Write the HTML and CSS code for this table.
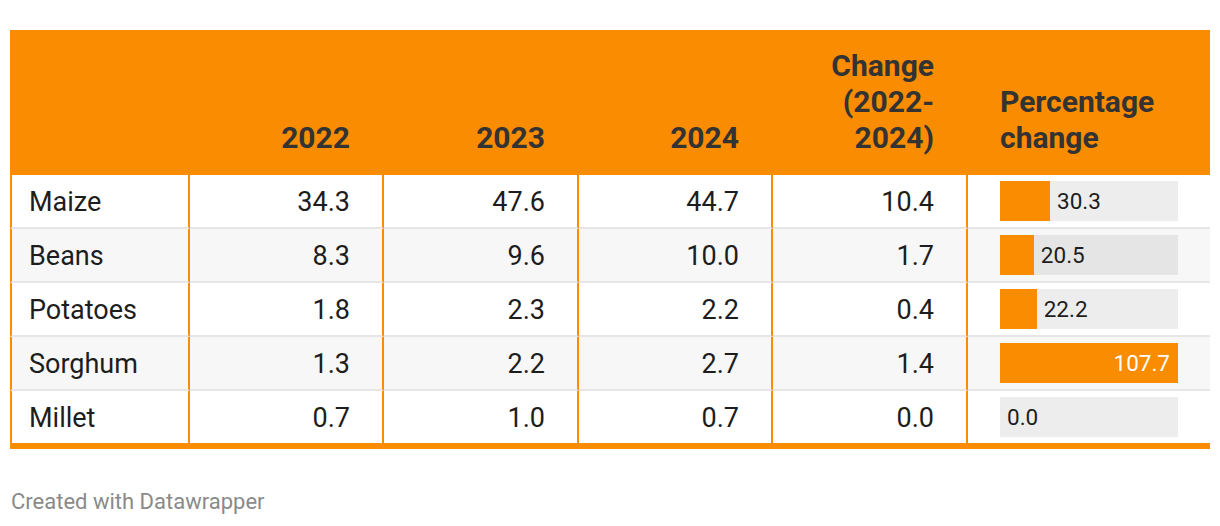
FILE: index.html
```html
<!DOCTYPE html>
<html lang="en">
<head>
<meta charset="utf-8">
<title>Crop production table</title>
<link rel="stylesheet" href="styles.css">
</head>
<body>
<div class="chart">
  <table class="dw-table">
    <colgroup>
      <col class="c1"><col class="c2"><col class="c3"><col class="c4"><col class="c5"><col class="c6">
    </colgroup>
    <thead>
      <tr>
        <th class="first"></th>
        <th class="num">2022</th>
        <th class="num">2023</th>
        <th class="num">2024</th>
        <th class="num">Change<br>(2022-<br>2024)</th>
        <th class="bar-col">Percentage<br>change</th>
      </tr>
    </thead>
    <tbody>
      <tr>
        <td class="first">Maize</td><td class="num">34.3</td><td class="num">47.6</td><td class="num">44.7</td><td class="num">10.4</td>
        <td class="bar-col"><div class="bar"><div class="fill" style="width:28.13%"></div><span class="lbl">30.3</span></div></td>
      </tr>
      <tr class="alt">
        <td class="first">Beans</td><td class="num">8.3</td><td class="num">9.6</td><td class="num">10.0</td><td class="num">1.7</td>
        <td class="bar-col"><div class="bar"><div class="fill" style="width:19.03%"></div><span class="lbl">20.5</span></div></td>
      </tr>
      <tr>
        <td class="first">Potatoes</td><td class="num">1.8</td><td class="num">2.3</td><td class="num">2.2</td><td class="num">0.4</td>
        <td class="bar-col"><div class="bar"><div class="fill" style="width:20.61%"></div><span class="lbl">22.2</span></div></td>
      </tr>
      <tr class="alt">
        <td class="first">Sorghum</td><td class="num">1.3</td><td class="num">2.2</td><td class="num">2.7</td><td class="num">1.4</td>
        <td class="bar-col"><div class="bar full"><div class="fill" style="width:100%"></div><span class="lbl">107.7</span></div></td>
      </tr>
      <tr class="last">
        <td class="first">Millet</td><td class="num">0.7</td><td class="num">1.0</td><td class="num">0.7</td><td class="num">0.0</td>
        <td class="bar-col"><div class="bar"><div class="fill" style="width:0%"></div><span class="lbl">0.0</span></div></td>
      </tr>
    </tbody>
  </table>
  <div class="footer">Created with Datawrapper</div>
</div>
</body>
</html>
```

FILE: styles.css
```css
* { box-sizing: border-box; }

html, body {
  margin: 0;
  padding: 0;
  background: #ffffff;
}

body {
  font-family: Roboto, "Liberation Sans", Arial, sans-serif;
  color: #1d1d1d;
}

.chart {
  padding: 30px 10px 0 10px;
}

.dw-table {
  width: 1200px;
  table-layout: fixed;
  border-collapse: separate;
  border-spacing: 0;
}

.c1 { width: 180px; }
.c2 { width: 194px; }
.c3 { width: 195px; }
.c4 { width: 194px; }
.c5 { width: 195px; }
.c6 { width: 242px; }

.dw-table th {
  background: #f98c00;
  color: #333333;
  font-size: 30px;
  font-weight: 700;
  line-height: 36px;
  vertical-align: bottom;
  height: 145px;
  padding: 18px 32px 19px 32px;
  border-right: 2px solid #f98c00;
}

.dw-table th.first { border-left: 2px solid #f98c00; }
.dw-table th.num { text-align: right; padding-left: 8px; }
.dw-table th.bar-col { text-align: left; border-right: none; }

.dw-table td {
  height: 54px;
  font-size: 27px;
  line-height: 30px;
  padding: 1px 32px 0 8px;
  vertical-align: middle;
  border-right: 2px solid #f98c00;
  border-bottom: 2px solid #e6e6e6;
  white-space: nowrap;
}

.dw-table td.first {
  text-align: left;
  padding-left: 17px;
  border-left: 2px solid #f98c00;
}

.dw-table td.num { text-align: right; }

.dw-table td.bar-col {
  border-right: none;
  padding: 0 32px;
}

.dw-table tr.alt td { background: #f7f7f7; }

.dw-table tr.last td {
  height: 58px;
  border-bottom: 6px solid #f98c00;
}

.bar {
  position: relative;
  display: flex;
  align-items: center;
  width: 178px;
  height: 40px;
  background: rgba(0, 0, 0, 0.07);
}

.bar .fill {
  height: 100%;
  background: #f98c00;
  flex: none;
}

.bar .lbl {
  font-size: 22.5px;
  line-height: 1;
  padding-left: 7px;
  color: #1d1d1d;
}

.bar.full .lbl {
  position: absolute;
  right: 8px;
  top: 50%;
  transform: translateY(-50%);
  color: #ffffff;
  padding-left: 0;
}

.footer {
  margin-top: 40px;
  font-size: 22px;
  color: #8a8a8a;
  padding-left: 1px;
}
```
